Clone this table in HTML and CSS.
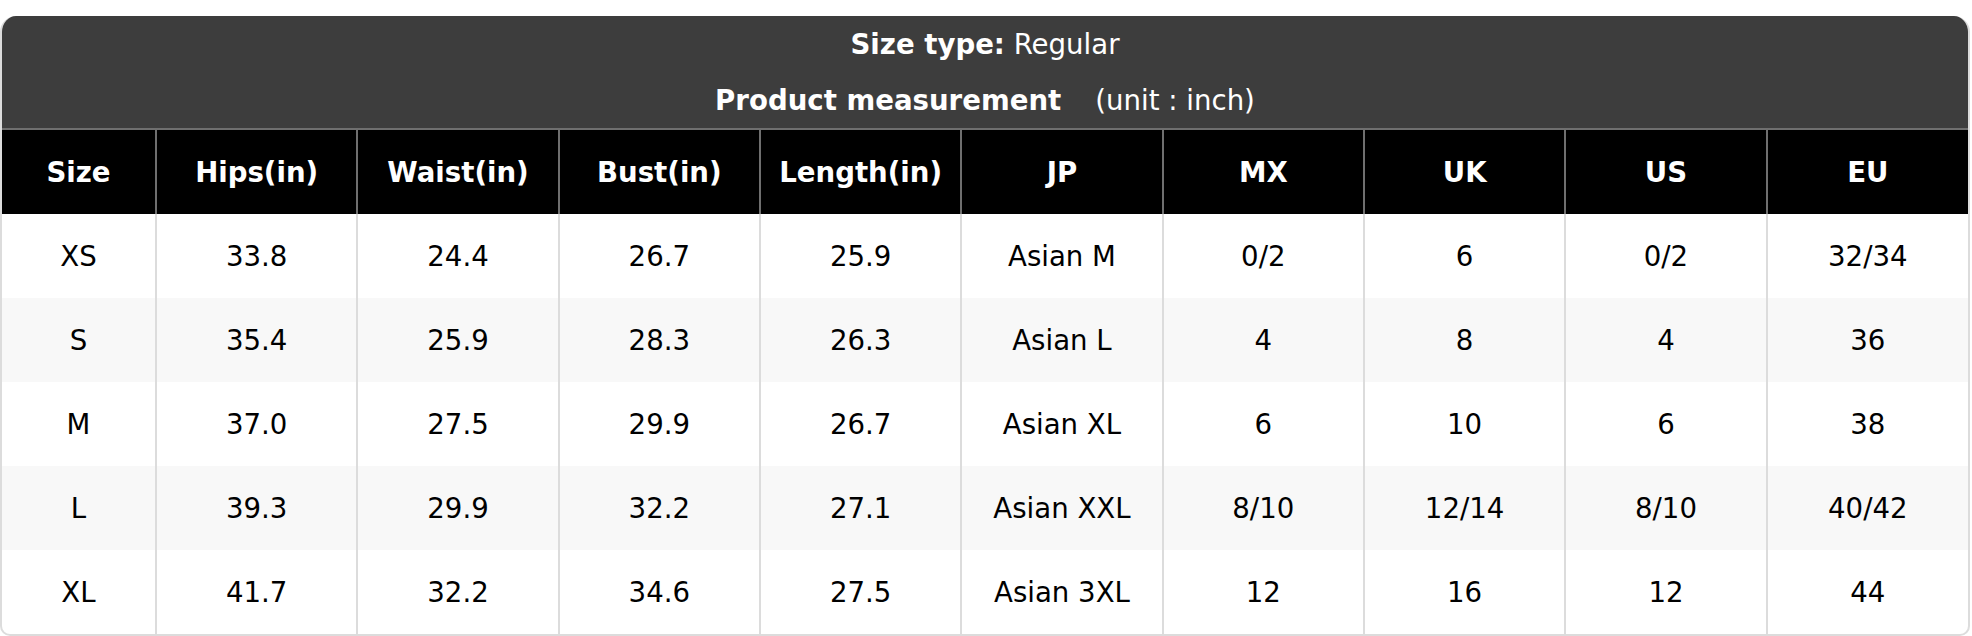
FILE: index.html
```html
<!DOCTYPE html>
<html lang="en">
<head>
<meta charset="utf-8">
<title>Size chart</title>
<link rel="stylesheet" href="styles.css">
</head>
<body>
<div class="chart">
  <div class="title">
    <div class="title-line"><span><b>Size type:</b> Regular</span></div>
    <div class="title-line"><span><b>Product measurement</b><span class="unit">(unit : inch)</span></span></div>
  </div>
  <table class="sizes">
    <thead>
      <tr>
        <th class="c-size">Size</th><th>Hips(in)</th><th>Waist(in)</th><th>Bust(in)</th><th>Length(in)</th><th>JP</th><th>MX</th><th>UK</th><th>US</th><th>EU</th>
      </tr>
    </thead>
    <tbody>
      <tr><td>XS</td><td>33.8</td><td>24.4</td><td>26.7</td><td>25.9</td><td>Asian M</td><td>0/2</td><td>6</td><td>0/2</td><td>32/34</td></tr>
      <tr><td>S</td><td>35.4</td><td>25.9</td><td>28.3</td><td>26.3</td><td>Asian L</td><td>4</td><td>8</td><td>4</td><td>36</td></tr>
      <tr><td>M</td><td>37.0</td><td>27.5</td><td>29.9</td><td>26.7</td><td>Asian XL</td><td>6</td><td>10</td><td>6</td><td>38</td></tr>
      <tr><td>L</td><td>39.3</td><td>29.9</td><td>32.2</td><td>27.1</td><td>Asian XXL</td><td>8/10</td><td>12/14</td><td>8/10</td><td>40/42</td></tr>
      <tr><td>XL</td><td>41.7</td><td>32.2</td><td>34.6</td><td>27.5</td><td>Asian 3XL</td><td>12</td><td>16</td><td>12</td><td>44</td></tr>
    </tbody>
  </table>
</div>
</body>
</html>
```

FILE: styles.css
```css
html, body {
  margin: 0;
  padding: 0;
  background: #ffffff;
}

body {
  font-family: "DejaVu Sans", "Liberation Sans", sans-serif;
  color: #000;
}

.chart {
  width: 1970px;
  margin-top: 16px;
  border-radius: 16px 16px 10px 10px;
  overflow: hidden;
  border: 2px solid #dcdcdc;
  border-top: none;
  box-sizing: border-box;
  background: #fff;
}

.title {
  background: #3d3d3d;
  color: #fff;
  font-size: 27.6px;
  text-align: center;
}

.title-line {
  height: 56px;
  display: flex;
  align-items: center;
  justify-content: center;
}

.title-line b {
  font-weight: bold;
}

.unit {
  margin-left: 34px;
}

.sizes {
  width: 100%;
  border-collapse: collapse;
  table-layout: fixed;
  font-size: 27.6px;
}

.sizes th,
.sizes td {
  text-align: center;
  vertical-align: middle;
  padding: 0;
}

.sizes th {
  background: #000;
  color: #fff;
  font-weight: bold;
  height: 84px;
  border-top: 2px solid #6f6f6f;
  border-left: 2px solid #6f6f6f;
}

.sizes th:first-child {
  border-left: none;
}

.sizes th.c-size {
  width: 153px;
}

.sizes td {
  height: 84px;
  border-left: 2px solid #dcdcdc;
}

.sizes td:first-child {
  border-left: none;
}

.sizes tbody tr:nth-child(even) td {
  background: #f8f8f8;
}
```
